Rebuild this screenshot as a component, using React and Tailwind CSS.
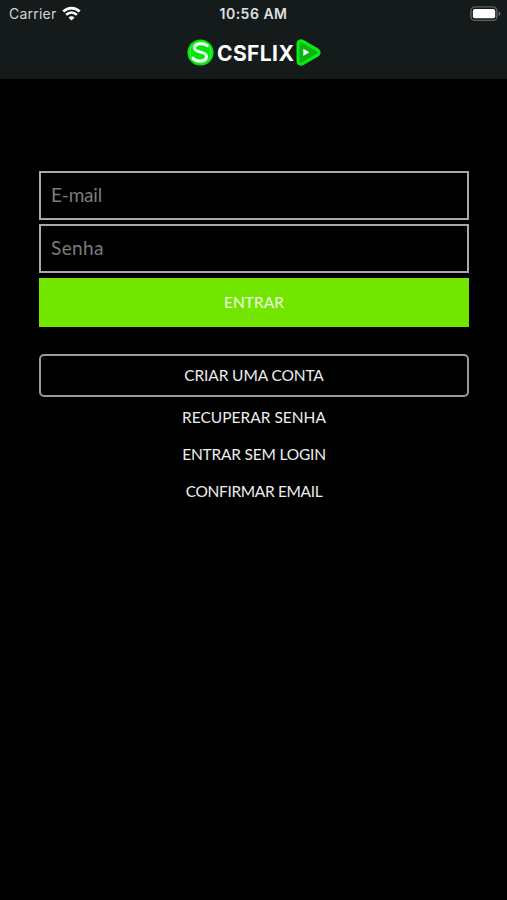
function StatusBar() {
  return (
    <div className="relative flex h-7 items-center justify-between pl-[9px] pr-[6px] font-['Inter','Liberation_Sans',sans-serif] text-[14px] leading-none">
      <div className="flex items-center gap-[6px] text-[#d3d5d5]">
        <span className="tracking-[0.22px]">Carrier</span>
        <svg className="-mt-[2px]" width="19" height="15" viewBox="0 0 19 15" fill="none" stroke="#fff" strokeWidth="2.7">
          <path d="M1.3 5.5C5.9 .9 13.1 .9 17.7 5.5" />
          <path d="M4.2 8.9C7.3 5.9 11.7 5.9 14.8 8.9" />
          <path d="M9.5 14.4L6.5 11.5C8.2 9.9 10.8 9.9 12.5 11.5Z" fill="#fff" stroke="none" />
        </svg>
      </div>
      <span className="absolute inset-x-0 text-center font-semibold tracking-[0.5px] text-[#dfe1e1]">10:56 AM</span>
      <svg className="-mt-px" width="31" height="16" viewBox="0 0 31 16">
        <rect x=".9" y=".9" width="26" height="13.5" rx="4.2" fill="#151a1a" stroke="#5f6363" strokeWidth="1.4" />
        <rect x="2.9" y="2.9" width="22.3" height="9.4" rx="2" fill="#fff" />
        <path d="M28.7 5.4C31 6.3 31 9 28.7 9.9Z" fill="#6d7171" />
      </svg>
    </div>
  );
}

function Logo() {
  return (
    <div className="flex h-[49px] items-center justify-center gap-[3px] pl-px">
      <svg width="27" height="27" viewBox="0 0 27 27">
        <circle cx="13.5" cy="13.5" r="13.1" fill="#06e510" />
        <circle cx="13.5" cy="13.5" r="10.6" fill="none" stroke="#55f35a" strokeWidth=".9" />
        <path
          d="M20.2 6.7C17 3.7 7.9 3.9 7.6 9.2C7.4 14.5 19.7 11.7 19.5 17.4C19.3 23 9.8 23.3 6 19.2"
          fill="none"
          stroke="#f4fff4"
          strokeWidth="3"
          strokeLinecap="round"
        />
      </svg>
      <span className="w-[76px] whitespace-nowrap pt-[2px] font-['Inter','Open_Sans',sans-serif] text-[21px] font-bold leading-none tracking-[0.4px] text-white">CSFLIX</span>
      <svg width="25" height="27" viewBox="0 0 25 27">
        <path
          d="M2 4.8C2 2.2 4.5 1.2 6.8 2.4L21.4 10.9C23.7 12.3 23.7 14.7 21.4 16.1L6.8 24.6C4.5 25.8 2 24.8 2 22.2Z"
          fill="#0bb414"
          stroke="#09ee12"
          strokeWidth="3"
          strokeLinejoin="round"
        />
        <path d="M7.3 9.7L13.3 13.3L7.3 16.9Z" fill="#fff" />
      </svg>
    </div>
  );
}

const field =
  "block h-[49px] w-full border-2 border-[#a9a9a9] bg-black pl-[10px] pb-[2px] text-[19px] text-white outline-none placeholder:text-[#7c7c7c] placeholder:opacity-100";

export default function App() {
  return (
    <div className="min-h-[900px] w-full bg-black font-['Lato','Open_Sans',sans-serif] text-[#ededed]">
      <header className="h-[79px] bg-[#151a1a]">
        <StatusBar />
        <Logo />
      </header>
      <main className="pl-[39px] pr-[38px] pt-[92px]">
        <form className="flex flex-col">
          <input className={`${field} tracking-[-0.2px]`} type="email" placeholder="E-mail" />
          <input className={`${field} mt-1 tracking-[0.4px]`} type="password" placeholder="Senha" />
          <button type="button" className="mt-[5px] h-[49px] w-full bg-[#73e600] text-[15.5px] text-[#f1fce6]">ENTRAR</button>
        </form>
        <button type="button" className="mt-[27px] block h-[43px] w-full rounded-[5px] border-2 border-[#999] text-[15.5px] tracking-[-0.12px]">CRIAR UMA CONTA</button>
        <nav className="mt-[2px] flex flex-col items-center text-[15.5px]">
          <a className="flex h-[37px] items-center">RECUPERAR SENHA</a>
          <a className="flex h-[37px] items-center tracking-[-0.2px]">ENTRAR SEM LOGIN</a>
          <a className="flex h-[37px] items-center tracking-[-0.35px]">CONFIRMAR EMAIL</a>
        </nav>
      </main>
    </div>
  );
}
